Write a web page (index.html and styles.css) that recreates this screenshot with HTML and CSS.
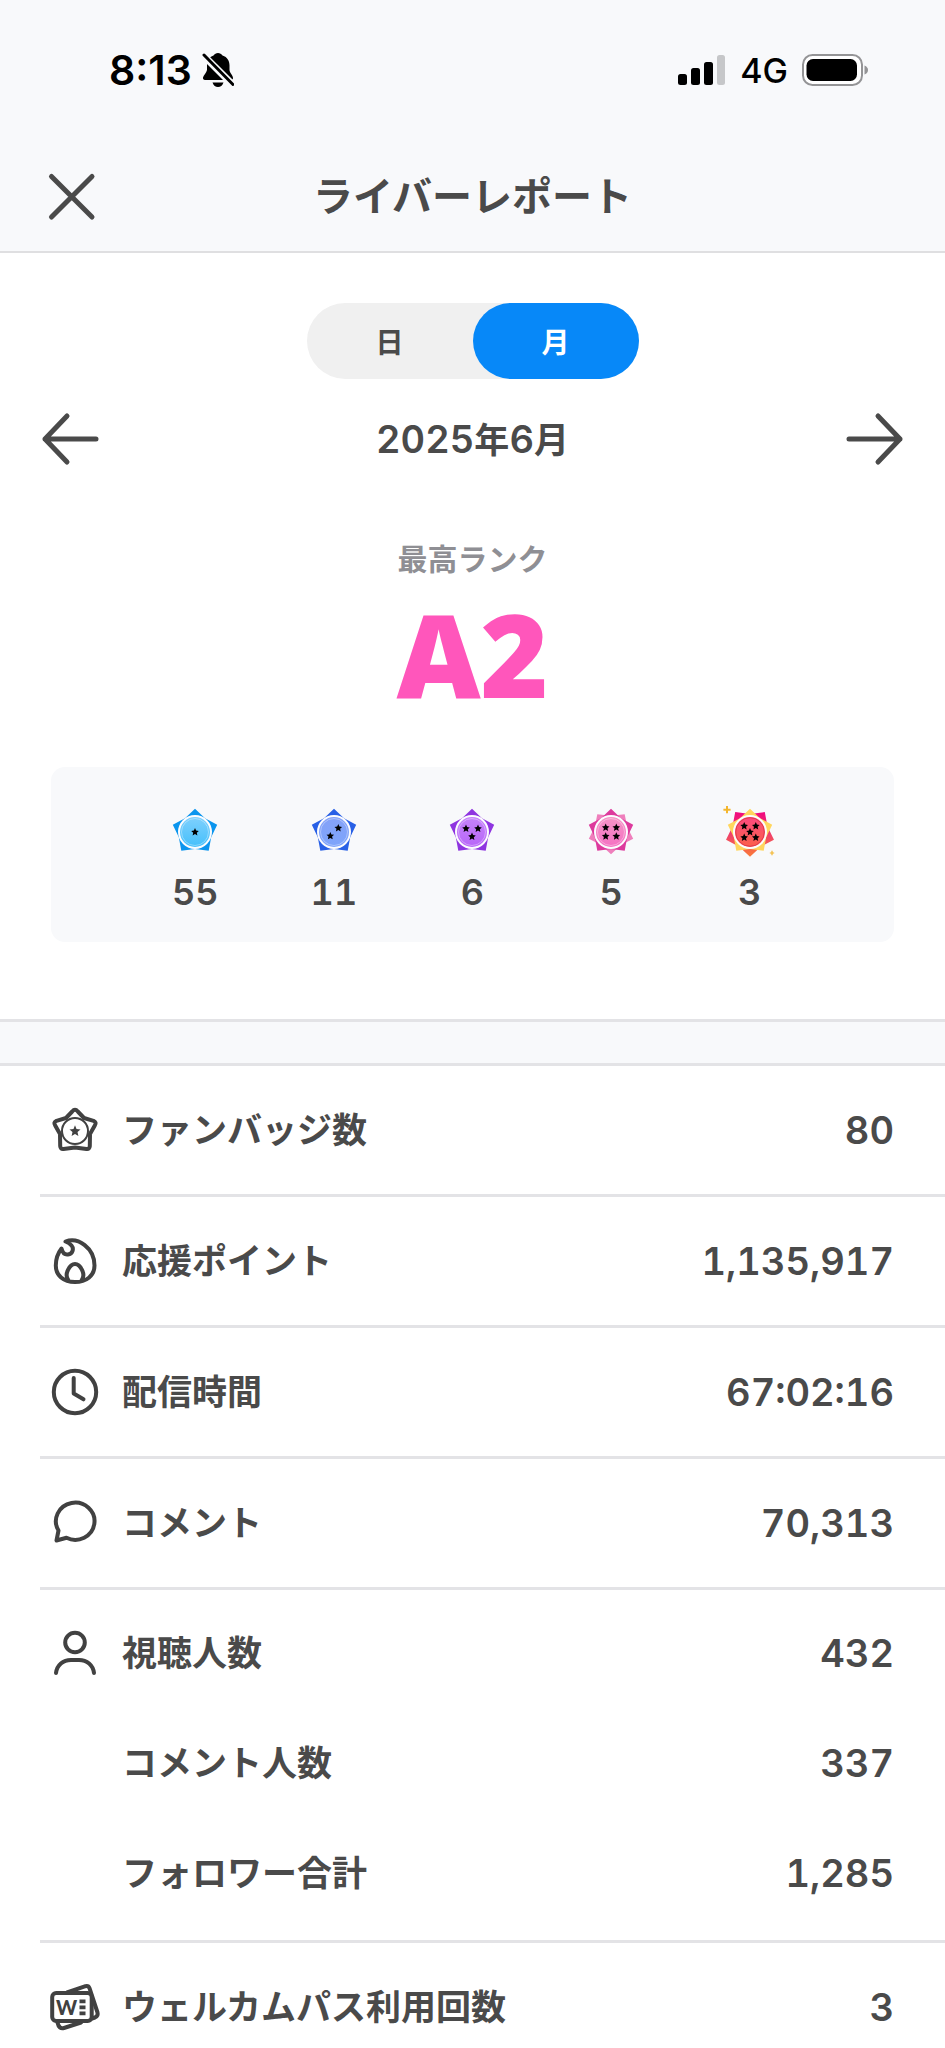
FILE: index.html
```html
<!DOCTYPE html>
<html lang="ja">
<head>
<meta charset="utf-8">
<meta name="viewport" content="width=device-width, initial-scale=1">
<title>ライバーレポート</title>
<link rel="stylesheet" href="styles.css">
</head>
<body>
<svg class="defs" aria-hidden="true">
  <defs>
    <path id="burst" d="M0-23.3 10-13.800 22.200-7.200 16.200 5.300 13.700 18.800 0 17-13.700 18.800-16.200 5.300-22.200-7.200-10-13.800Z"/>
    <path id="star" d="M0-3.9 1.1-1.4 3.8-1.1 1.8.8 2.4 3.5 0 2.1-2.4 3.5-1.8.8-3.8-1.1-1.1-1.4Z"/>
    <path id="spark" d="M-1-3.6H1V-1H3.6V1H1V3.6H-1V1H-3.6V-1H-1Z"/>
    <linearGradient id="sun" x1="0" y1="1" x2="0" y2="0"><stop offset="0" stop-color="#f0087f"/><stop offset=".5" stop-color="#f0406a"/><stop offset="1" stop-color="#fa7a38"/></linearGradient>
    <linearGradient id="d1" x1="0" y1="0" x2="0" y2="1"><stop offset="0" stop-color="#7fd0fd"/><stop offset="1" stop-color="#45c0fb"/></linearGradient>
    <linearGradient id="d2" x1="0" y1="0" x2="0" y2="1"><stop offset="0" stop-color="#85a2f8"/><stop offset="1" stop-color="#7da4fb"/></linearGradient>
    <linearGradient id="d3" x1="0" y1="0" x2="0" y2="1"><stop offset="0" stop-color="#c583fb"/><stop offset="1" stop-color="#b866f8"/></linearGradient>
    <linearGradient id="d4" x1="0" y1="0" x2="0" y2="1"><stop offset="0" stop-color="#f594c6"/><stop offset="1" stop-color="#f571c3"/></linearGradient>
    <linearGradient id="d5" x1="0" y1="0" x2="0" y2="1"><stop offset="0" stop-color="#fa4a80"/><stop offset="1" stop-color="#fb6048"/></linearGradient>
  </defs>
</svg>

<header class="header">
  <div class="status">
    <div class="status-side">
      <span class="clock">8:13</span>
      <svg class="bell" viewBox="0 0 32 36" aria-label="消音">
        <path d="M16 1C17.800 1 19.500 2 20.500 3.500 25.500 5 27.500 9 27.500 13.500V18C27.500 21 31 23 31 26 31 27.500 30 28 29 28H3C1.500 28 .8 27 1 25.500 1.500 23 4.500 21 5 18V13.500C5 9 7 5 11.500 3.500 12.500 2 14.200 1 16 1ZM10.500 30.500H21.500C20.500 33.500 18.500 35 16 35 13.500 35 11.500 33.500 10.500 30.500Z"/>
        <path class="bell-gap" d="M0 2 31 33"/>
        <path class="bell-cut" d="M2 3 31 32.500"/>
      </svg>
    </div>
    <div class="status-side status-right">
      <svg class="signal" viewBox="0 0 48 30" aria-label="電波">
        <rect x="0" y="19" width="9" height="11" rx="2.500"/><rect x="13" y="13" width="9" height="17" rx="2.500"/><rect x="26" y="7" width="9" height="23" rx="2.500"/><rect class="dim" x="39" y="0" width="8" height="30" rx="2.500"/>
      </svg>
      <span class="network">4G</span>
      <svg class="battery" viewBox="0 0 66 32" aria-label="電池">
        <rect class="shell" x="1" y="1" width="59" height="30" rx="9.500"/><rect x="4.500" y="5" width="50.500" height="22" rx="6.500"/><path class="nub" d="M62.500 11.500Q66 13 66 16T62.500 20.500Z"/>
      </svg>
    </div>
  </div>
  <div class="nav">
    <button class="icon-button" type="button" aria-label="閉じる"><svg class="line-icon" viewBox="0 0 60 60"><path d="M9.500 10.500 50 51M50 10.500 9.500 51"/></svg></button>
    <h1 class="title">ライバーレポート</h1>
  </div>
</header>

<main>
  <section class="summary">
    <div class="toggle">
      <button class="toggle-item" type="button" aria-pressed="false">日</button>
      <button class="toggle-item selected" type="button" aria-pressed="true">月</button>
    </div>
    <div class="period">
      <button class="icon-button" type="button" aria-label="前の月"><svg class="line-icon" viewBox="0 0 60 60"><path d="M56 30H5M27 7 5 30 27 53"/></svg></button>
      <h2 class="month">2025<span class="kanji">年</span>6<span class="kanji">月</span></h2>
      <button class="icon-button" type="button" aria-label="次の月"><svg class="line-icon" viewBox="0 0 60 60"><path d="M4 30H55M33 7 55 30 33 53"/></svg></button>
    </div>
    <p class="rank-label">最高ランク</p>
    <p class="rank">A2</p>
    <ul class="badges">
      <li class="badge">
        <svg class="badge-icon" viewBox="-28 -28 56 56"><use href="#burst" fill="#0b95ee"/><circle class="halo" r="17"/><circle r="15" fill="url(#d1)"/><circle class="ring" r="13.500"/><use href="#star"/></svg>
        <span>55</span>
      </li>
      <li class="badge">
        <svg class="badge-icon" viewBox="-28 -28 56 56"><use href="#burst" fill="#2860e6"/><circle class="halo" r="17"/><circle r="15" fill="url(#d2)"/><circle class="ring" r="13.500"/><use href="#star" x="4.300" y="-4"/><use href="#star" x="-3.700" y="3.800"/></svg>
        <span>11</span>
      </li>
      <li class="badge">
        <svg class="badge-icon" viewBox="-28 -28 56 56"><use href="#burst" fill="#8f35e0"/><circle class="halo" r="17"/><circle r="15" fill="url(#d3)"/><circle class="ring" r="13.500"/><use href="#star" x="-6" y="-3.500"/><use href="#star" x="6" y="-3.500"/><use href="#star" y="4.500"/></svg>
        <span>6</span>
      </li>
      <li class="badge">
        <svg class="badge-icon" viewBox="-28 -28 56 56"><use href="#burst" fill="#ef7fbc" transform="scale(1 -.95)"/><use href="#burst" fill="#dd3a9d"/><circle class="halo" r="17"/><circle r="15" fill="url(#d4)"/><circle class="ring" r="13.500"/><use href="#star" x="-5.300" y="-4.500"/><use href="#star" x="5.300" y="-4.500"/><use href="#star" x="-5.300" y="4.200"/><use href="#star" x="5.300" y="4.200"/></svg>
        <span>5</span>
      </li>
      <li class="badge">
        <svg class="badge-icon" viewBox="-28 -28 56 56"><use href="#burst" fill="url(#sun)" transform="scale(1.080 -1.060)"/><use class="sun-front" href="#burst"/><circle class="halo" r="17"/><circle r="15" fill="url(#d5)"/><circle r="14.300" fill="none" stroke="#e23a50"/><use href="#star" x="-5.800" y="-6"/><use href="#star" x="5.800" y="-6"/><use href="#star"/><use href="#star" x="-5.800" y="5.500"/><use href="#star" x="5.800" y="5.500"/><use href="#spark" fill="#f3b62e" x="-23" y="-22.300"/><use href="#spark" fill="#f3b62e" transform="translate(22 21) scale(.6)"/></svg>
        <span>3</span>
      </li>
    </ul>
  </section>

  <dl class="stats">
    <div class="row">
      <dt class="label"><svg class="stat-icon" viewBox="0 0 48 48"><path d="M21.200 5.500Q24 2.200 26.800 5.500L33 12 42.500 14.800Q46 16.500 43.800 19.500L39 28 38.800 40Q38.500 43.500 35.500 43L24 41.500 12.500 43Q9.500 43.500 9.200 40L9 28 4.200 19.500Q2 16.500 5.500 14.800L15 12Z"/><circle class="thin" cx="24" cy="25" r="13"/><path class="solid" d="M24 19.300 25.500 23 29.500 23.400 26.500 26 27.400 30 24 27.900 20.600 30 21.500 26 18.500 23.400 22.500 23Z"/></svg><span class="name">ファンバッジ数</span></dt>
      <dd class="value">80</dd>
    </div>
    <div class="row">
      <dt class="label"><svg class="stat-icon" viewBox="0 0 48 48"><path d="M14.500 4.500C27-.5 43.500 11 43.500 28.500 43.500 39 35 45 24 45 12.500 45 4.800 38.500 4.800 28.500 4.800 22 7 16 10.500 11.500 11.500 15.500 13.500 18 17 17.500 22 17 23 11.500 20.500 8.500 19 6.700 17 5.500 14.500 4.500ZM17.500 43.500C12.500 37 19 27 24 27 29 27 35.500 37 30.500 43.500"/></svg><span class="name">応援ポイント</span></dt>
      <dd class="value">1,135,917</dd>
    </div>
    <div class="row">
      <dt class="label"><svg class="stat-icon" viewBox="0 0 48 48"><circle cx="24" cy="24" r="21.200"/><path d="M22.700 10V25.500L32.500 31.300"/></svg><span class="name">配信時間</span></dt>
      <dd class="value">67:02:16</dd>
    </div>
    <div class="row">
      <dt class="label"><svg class="stat-icon" viewBox="0 0 48 48"><path d="M5.500 41.500 7.500 31.500A19.300 18.600 0 1 1 15.500 38.800Z"/></svg><span class="name">コメント</span></dt>
      <dd class="value">70,313</dd>
    </div>
    <div class="group">
      <div class="row">
        <dt class="label"><svg class="stat-icon" viewBox="0 0 48 48"><circle cx="24" cy="13.500" r="9.800"/><path d="M5 44C6 36 12 31 20 31H28C36 31 42 36 43 44"/></svg><span class="name">視聴人数</span></dt>
        <dd class="value">432</dd>
      </div>
      <div class="row">
        <dt class="label sub"><span class="name">コメント人数</span></dt>
        <dd class="value">337</dd>
      </div>
      <div class="row">
        <dt class="label sub"><span class="name">フォロワー合計</span></dt>
        <dd class="value">1,285</dd>
      </div>
    </div>
    <div class="row">
      <dt class="label"><svg class="stat-icon" viewBox="0 0 48 48"><rect x="1.200" y="10" width="39.500" height="28" rx="4"/><path d="M16 9.500 34.500 3.200Q37.500 2.500 38.500 5.200L46.500 29.500Q47.500 33 44 34.500L41 35.500M6.500 39.500Q8 46.500 13 45L30 39.500"/><path class="solid" d="M28.500 16.500H34.500V20.300H28.500ZM28.500 22.500H34.500V26.300H28.500ZM28.500 28.500H34.500V32.300H28.500Z"/><text class="mark" x="15.500" y="31.500">W</text></svg><span class="name">ウェルカムパス利用回数</span></dt>
      <dd class="value">3</dd>
    </div>
  </dl>
</main>
</body>
</html>
```
FILE: styles.css
```css
*, *::before { box-sizing: border-box; }

body {
  margin: 0;
  background: #fff;
  color: #4a4a4a;
  font-family: "Noto Sans CJK JP", sans-serif;
  font-weight: 700;
}

h1, h2, p, ul, dl, dd { margin: 0; padding: 0; font-weight: inherit; }
ul { list-style: none; }
button { border: 0; padding: 0; background: none; color: inherit; font: inherit; cursor: pointer; }
svg { display: block; flex: none; }
.defs { position: absolute; width: 0; height: 0; }

.header { background: #f8f9fb; border-bottom: 2px solid #dfdfe1; }

.status {
  display: flex;
  justify-content: space-between;
  align-items: center;
  height: 140px;
  padding: 0 77px 0 109px;
  color: #000;
  font-family: Inter, sans-serif;
}
.status-side { display: flex; align-items: center; gap: 10px; }
.status-right { gap: 14px; }
.clock { font-size: 41px; font-weight: 600; }
.network { font-size: 34px; font-weight: 500; }
.bell { width: 32px; height: 36px; }
.bell-gap, .bell-cut { fill: none; stroke: #f8f9fb; stroke-width: 7; }
.bell-cut { stroke: #000; stroke-width: 3; stroke-linecap: round; }
.signal { width: 48px; height: 30px; }
.dim { fill: #c6c7c9; }
.battery { width: 66px; height: 32px; }
.shell { fill: #fff; stroke: #949496; stroke-width: 2; }
.nub { fill: #949496; }

.nav {
  display: grid;
  grid-template-columns: 1fr auto 1fr;
  align-items: center;
  height: 111px;
  padding: 0 42px;
}
.title { padding-bottom: 3px; font-size: 40px; line-height: 60px; }
.icon-button { width: 60px; height: 60px; }
.line-icon {
  width: 60px;
  height: 60px;
  fill: none;
  stroke: #4a4a4a;
  stroke-width: 5;
  stroke-linecap: round;
  stroke-linejoin: round;
}

.summary {
  display: flex;
  flex-direction: column;
  align-items: center;
  padding: 50px 0 77px;
}
.toggle { display: flex; border-radius: 38px; background: #f0f0f0; }
.toggle-item { width: 166px; height: 76px; border-radius: 38px; font-size: 28px; }
.selected { background: #0788f8; color: #fff; }
.period {
  display: flex;
  justify-content: space-between;
  align-items: center;
  width: 100%;
  margin-top: 30px;
  padding: 0 40px;
}
.month {
  font-family: Inter, "Noto Sans CJK JP", sans-serif;
  font-size: 38px;
  font-weight: 600;
  line-height: 60px;
  font-variant-numeric: tabular-nums;
}
.kanji { font-size: 35px; font-weight: 700; line-height: 40px; }
.rank-label { margin-top: 68px; color: #8f8f94; font-size: 30px; line-height: 40px; }
.rank {
  margin-top: 26px;
  color: #ff56bb;
  font-family: "Open Sans", sans-serif;
  font-size: 116px;
  font-weight: 800;
  line-height: 100px;
}
.badges {
  display: flex;
  align-self: stretch;
  margin: 64px 51px 0;
  padding: 37px 75px 25px;
  border-radius: 14px;
  background: #f8f9fb;
}
.badge {
  display: flex;
  flex: 1;
  flex-direction: column;
  align-items: center;
  gap: 7px;
  font-family: Inter, sans-serif;
  font-size: 36px;
  font-weight: 600;
  line-height: 50px;
  font-variant-numeric: tabular-nums;
}
.badge-icon { width: 56px; height: 56px; }
.halo { fill: #fcfcfe; }
.ring { fill: none; stroke: #fff; stroke-opacity: .35; }
.sun-front { fill: #ffd65e; }

.stats::before {
  content: "";
  display: block;
  height: 47px;
  border: solid #e3e3e6;
  border-width: 3px 0;
  background: #f8f9fb;
}
.row {
  display: flex;
  justify-content: space-between;
  align-items: center;
  margin-left: 40px;
  padding: 39px 51px 39px 11px;
  border-bottom: 3px solid #e3e3e6;
}
.row:last-child { padding-bottom: 14px; border-bottom: 0; }
.label { display: flex; align-items: center; gap: 23px; font-size: 35px; line-height: 46px; }
.name { padding-bottom: 4px; }
.sub { padding-left: 71px; }
.value {
  font-family: Inter, sans-serif;
  font-size: 38px;
  font-weight: 600;
  line-height: 50px;
  font-variant-numeric: tabular-nums;
}
.group { margin-left: 40px; padding: 8px 0 12px; border-bottom: 3px solid #e3e3e6; }
.group .row { margin-left: 0; padding-top: 30px; padding-bottom: 30px; border-bottom: 0; }
.stat-icon {
  width: 48px;
  height: 48px;
  overflow: visible;
  fill: none;
  stroke: #414141;
  stroke-width: 4;
  stroke-linecap: round;
  stroke-linejoin: round;
}
.thin { stroke-width: 2; }
.solid { fill: #414141; stroke: none; }
.mark { fill: #414141; stroke: none; font: 900 20px Lato, sans-serif; text-anchor: middle; }
```
